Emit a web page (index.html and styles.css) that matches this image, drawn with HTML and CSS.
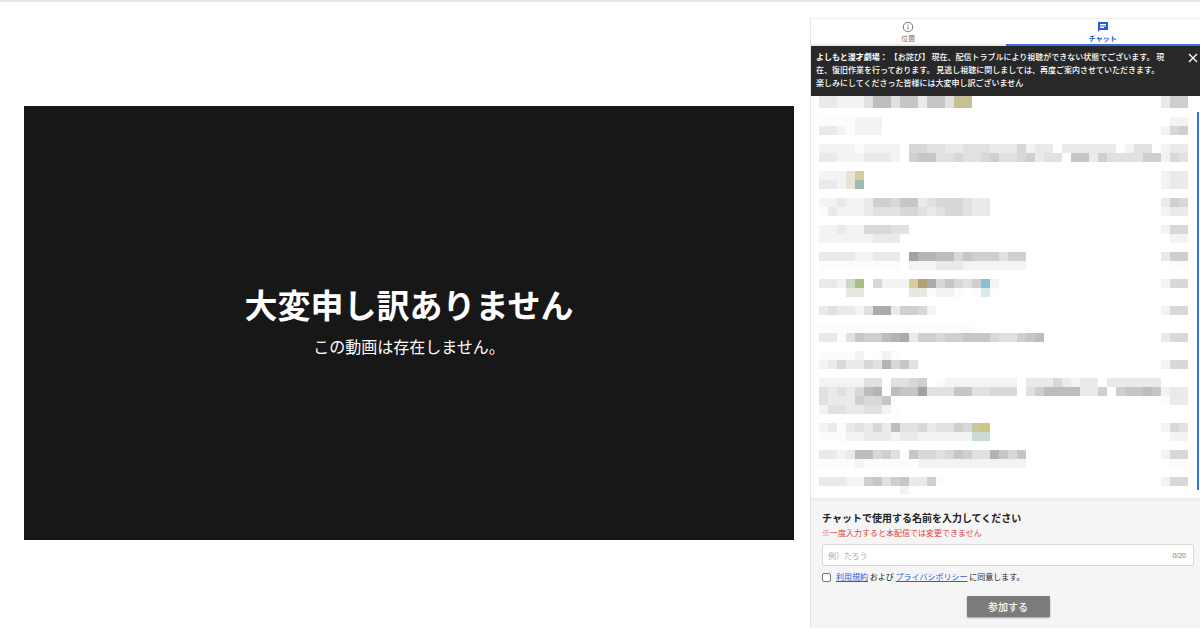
FILE: index.html
```html
<!DOCTYPE html>
<html lang="ja">
<head>
<meta charset="utf-8">
<title>配信</title>
<link rel="stylesheet" href="styles.css">
</head>
<body>
<div class="page">
  <main class="stage">
    <section class="player">
      <h1 class="player-title">大変申し訳ありません</h1>
      <p class="player-text">この動画は存在しません。</p>
    </section>
  </main>
  <aside class="side">
    <nav class="tabs">
      <button class="tab" type="button">
        <svg class="tab-icon" viewBox="0 0 24 24" aria-hidden="true"><circle cx="12" cy="12" r="9.5" fill="none" stroke="currentColor" stroke-width="2"/><path d="M11 7h2v2h-2zM11 11h2v6h-2z" fill="currentColor"/></svg>
        <span>位置</span>
      </button>
      <button class="tab tab-active" type="button">
        <svg class="tab-icon" viewBox="0 0 24 24" aria-hidden="true"><path fill="currentColor" fill-rule="evenodd" d="M2 2h20v16H6l-4 4zM6 6v2h12V6zM6 9v2h12V9zM6 12v2h8v-2z"/></svg>
        <span>チャット</span>
      </button>
    </nav>
    <div class="notice">
      <p class="notice-text"><b>よしもと漫才劇場：</b> 【お詫び】 現在、配信トラブルにより視聴ができない状態でございます。 現<br>在、復旧作業を行っております。 見逃し視聴に関しましては、再度ご案内させていただきます。<br>楽しみにしてくださった皆様には大変申し訳ございません</p>
      <button class="notice-close" type="button" aria-label="閉じる">
        <svg viewBox="0 0 10 10" aria-hidden="true"><path d="M1 1l8 8M9 1l-8 8" stroke="currentColor" stroke-width="1.3" fill="none"/></svg>
      </button>
    </div>
    <div class="chat">
      <div class="messages" id="messages"></div>
      <div class="thumb"></div>
    </div>
    <form class="join">
      <label class="join-title" for="name">チャットで使用する名前を入力してください</label>
      <p class="join-note">※一度入力すると本配信では変更できません</p>
      <div class="field">
        <input class="field-input" id="name" type="text" placeholder="例）たろう">
        <span class="field-count">0/20</span>
      </div>
      <div class="agree">
        <input class="agree-box" id="agree" type="checkbox">
        <label for="agree"><a href="#">利用規約</a> および <a href="#">プライバシポリシー</a> に同意します。</label>
      </div>
      <button class="join-button" type="button">参加する</button>
    </form>
  </aside>
</div>
<script src="mosaic.js"></script>
</body>
</html>
```
FILE: styles.css
```css
* { box-sizing: border-box; }
body {
  margin: 0;
  background: #fff;
  color: #222;
  font-family: "Noto Sans CJK JP", "Noto Sans", sans-serif;
  font-size: 8px;
}
p, h1 { margin: 0; }
button { border: 0; padding: 0; font-family: inherit; cursor: pointer; }
.page {
  display: flex;
  min-height: 100vh;
  border-top: 2px solid #e5e5e5;
  padding: 16px 0 2px;
}
.stage {
  flex: 1;
  display: flex;
  align-items: center;
  padding: 0 16px 0 24px;
}
.player {
  width: 100%;
  aspect-ratio: 16 / 9;
  padding-bottom: 8px;
  background: #171717;
  color: #fff;
  display: flex;
  flex-direction: column;
  align-items: center;
  justify-content: center;
  text-align: center;
}
.player-title { font-size: 33px; line-height: 48px; font-weight: 700; }
.player-text { font-size: 16px; line-height: 24px; margin-top: 6px; }
.side {
  width: 390px;
  display: flex;
  flex-direction: column;
  border-left: 1px solid #e4e4e4;
}
.tabs { display: flex; border-top: 1px solid #ececec; }
.tab {
  flex: 1;
  display: flex;
  flex-direction: column;
  align-items: center;
  background: #fff;
  color: #777;
  font-size: 7px;
  line-height: 10px;
  padding: 2px 0 1px;
  border-bottom: 2px solid #e8e8e8;
}
.tab-icon { width: 12px; height: 12px; }
.tab-active { color: #2a5bd7; font-weight: 700; border-bottom-color: #3b70dd; }
.notice {
  display: flex;
  justify-content: space-between;
  background: #282828;
  color: #fff;
  padding: 4px 2px 7px 5px;
}
.notice-text { font-size: 8px; line-height: 13px; font-weight: 500; white-space: nowrap; }
.notice-close { width: 10px; height: 16px; background: none; color: #fff; }
.notice-close svg { width: 10px; height: 10px; display: block; margin: auto; }
.chat { position: relative; flex: 1; padding: 0 12px 0 8px; }
.message { display: flex; justify-content: space-between; }
.message:first-child .line { height: 12px; }
.line { display: flex; height: 9px; }
.cell { width: 9px; }
.thumb {
  position: absolute;
  top: 16px;
  right: 1px;
  bottom: 8px;
  width: 2px;
  background: #3477e0;
}
.join {
  display: flex;
  flex-direction: column;
  background: #f5f5f5;
  border-top: 3px solid #ececec;
  padding: 9px 6px 11px 11px;
}
.join-title { font-size: 10px; line-height: 15px; font-weight: 700; color: #222; }
.join-note { line-height: 15px; color: #dc4545; }
.field {
  display: flex;
  align-items: center;
  height: 22px;
  margin-top: 4px;
  padding: 0 7px 0 5px;
  background: #fff;
  border: 1px solid #d8d8d8;
  border-radius: 2px;
}
.field-input {
  flex: 1;
  min-width: 0;
  border: 0;
  padding: 0;
  outline: 0;
  background: none;
  font-family: inherit;
  font-size: 8px;
}
.field-input::placeholder { color: #aaa; }
.field-count { font-family: "Liberation Sans", sans-serif; font-size: 7px; color: #777; }
.agree { display: flex; align-items: center; gap: 5px; margin-top: 4px; line-height: 14px; }
.agree-box {
  appearance: none;
  width: 9px;
  height: 9px;
  margin: 0;
  background: #fff;
  border: 1px solid #777;
  border-radius: 2px;
}
.agree a { color: #2a5bd7; }
.join-button {
  align-self: center;
  width: 83px;
  height: 21px;
  margin-top: 12px;
  background: #7c7c7c;
  color: #fff;
  font-size: 10px;
  line-height: 20px;
  font-weight: 500;
  border-radius: 1px;
  box-shadow: 0 1px 2px rgba(0, 0, 0, .35);
}
```
FILE: mosaic.js
```js
// Censored chat messages: each line is a run of tiles, one character per tile.
// Hex digits are grey levels (higher is darker); letters from TINTS are colours.
const TINTS = {
  t: '#cabf93', T: '#d8cb9f', p: '#e7e4d4', g: '#9dbab0', q: '#d0d6c1',
  G: '#a8bd83', l: '#e7e9df', b: '#b3a077', u: '#86c0d1', v: '#d9e9ec',
  y: '#cbc79c', Y: '#cfc386', m: '#c9d9d4'
};
const MESSAGES = [
  [['221113773662663tt'], ['255']],
  [['', '0000111', '2210111'], ['', '.11', '145']],
  [['', '111101111.4433223332224122.222222.133', '221112221.56633433453345233.6625333355'], ['', '122', '143']],
  [['', '111pT', '221pg'], ['', '122', '122']],
  [['', '1121125546623444322', '0211123334432344322'], ['', '254', '122']],
  [['', '1121144433', '111111222'], ['', '144', '.11']],
  [['', '222211222.A887746555355', '000000000.1112221111111'], ['', '255', '.00']],
  [['', '221qG.4111Tb946435u1', '...ll.....ll0110.0v0'], ['', '144']],
  [['', '2322139925541'], ['', '144']],
  [['', '00000000000000000', '2203655789255455666433567'], ['', '', '244']],
  [['', '00001.010', '12422438463'], ['', '', '144']],
  [['', '1111133.3345.011111111.22242122.222222', '3232478.766A3336633444.357777225.56676'], ['', '', '122', '022']],
  [['', '12023242733423354yY', '00011222122111111mm'], ['', '143', '.11']],
  [['', '221277453.6443465338646', '0000100000.111111111111'], ['', '144', '.00']],
  [['', '22211563562250', '.........1'], ['', '144']]
];
MESSAGES[11][0].push('32225446', '133223310');

function buildLines(lines) {
  const block = document.createElement('div');
  for (const text of lines) {
    const line = document.createElement('div');
    line.className = 'line';
    for (const ch of text) {
      const cell = document.createElement('span');
      cell.className = 'cell';
      if (ch in TINTS) {
        cell.style.background = TINTS[ch];
      } else if (ch !== '.') {
        const level = 252 - parseInt(ch, 16) * 9;
        cell.style.background = `rgb(${level}, ${level}, ${level})`;
      }
      line.append(cell);
    }
    block.append(line);
  }
  return block;
}

const list = document.getElementById('messages');
for (const [body, time] of MESSAGES) {
  const row = document.createElement('div');
  row.className = 'message';
  row.append(buildLines(body), buildLines(time));
  list.append(row);
}
```
